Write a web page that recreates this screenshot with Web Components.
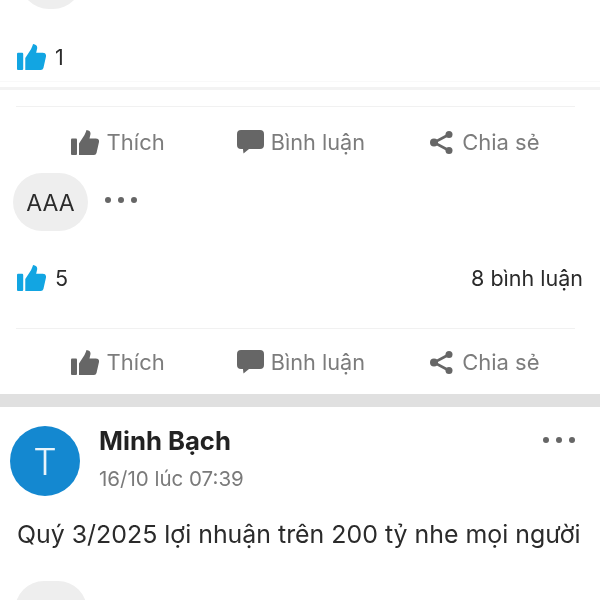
<!DOCTYPE html>
<html lang="vi"><head><meta charset="utf-8"><title>Feed</title>
<style>
html,body{margin:0;background:#fff}
body{font-family:Inter,"Noto Sans",sans-serif;color:#222}
</style></head><body>
<x-feed>
  <x-bubble style="margin:-49px 0 0 20px;--w:62px;--h:58px"></x-bubble>
  <x-stats count="1" style="margin-top:24px;border-bottom:1px solid #f9f9f9"></x-stats>
  <x-rule style="margin-top:5px;--h:3px;--c:#f3f3f3"></x-rule>
  <x-actions style="margin-top:16px"></x-actions>
  <x-bubble style="margin-left:13px;--w:75px;--h:58px" dots>AAA</x-bubble>
  <x-stats count="5" comments="8 bình luận" style="margin-top:23px"></x-stats>
  <x-actions style="margin-top:26px;--top:17px;--bottom:16px"></x-actions>
  <x-rule style="--h:13px;--c:#e0e0e0"></x-rule>
  <x-post name="Minh Bạch" time="16/10 lúc 07:39" letter="T">Quý 3/2025 lợi nhuận trên 200 tỷ nhe mọi người</x-post>
  <x-bubble style="margin:31px 0 0 15px;--w:72px;--h:58px"></x-bubble>
</x-feed>
<script>
const THUMB=`<svg viewBox="0 0 28 25" width="28" height="25" fill="currentColor" aria-hidden="true"><rect x="0" y="8.500" width="6" height="16.500" rx="1"/><path d="M8 13.500 13.500 5Q15 2 15.500 0 19.800 .5 19.500 4L18.500 8.500H25Q28.500 8.500 28 12L25.500 23Q25 25 23 25H8Z"/></svg>`;
const COMMENT=`<svg viewBox="0 0 27 24" width="27" height="24" fill="currentColor" aria-hidden="true"><path d="M4 0H23Q27 0 27 4V15Q27 19 23 19H12L6.500 23.500Q6 20 6 19H4Q0 19 0 15V4Q0 0 4 0Z"/></svg>`;
const SHARE=`<svg viewBox="0 0 25 25" width="25" height="25" fill="currentColor" stroke="currentColor" aria-hidden="true"><path d="M20 4.500 5 12.500 20 20.500" fill="none" stroke-width="2.600"/><circle cx="20" cy="4.500" r="3.500" stroke="none"/><circle cx="5" cy="12.500" r="4" stroke="none"/><circle cx="20" cy="20.500" r="3.500" stroke="none"/></svg>`;
function def(tag,render){customElements.define(tag,class extends HTMLElement{connectedCallback(){if(!this.shadowRoot){this.attachShadow({mode:'open'}).innerHTML=render(this)}}})}
def('x-feed',()=>`<style>:host{display:block;width:600px;height:600px;overflow:hidden;filter:blur(.35px)}</style><slot></slot>`);
def('x-rule',()=>`<style>:host{display:block;height:var(--h,1px);background:var(--c,#eee)}</style>`);
def('x-bubble',el=>`<style>:host{display:flex;align-items:center;gap:17px}
.b{box-sizing:border-box;padding-top:2px;width:var(--w);height:var(--h);border-radius:29px;background:#eeeeee;display:flex;align-items:center;justify-content:center;font-size:23px;color:#2b2b2b}
.d{display:flex;gap:7px;margin-top:-4px}.d i{width:6px;height:6px;border-radius:50%;background:#666}</style>
<div class="b"><slot></slot></div>${el.hasAttribute('dots')?'<div class="d"><i></i><i></i><i></i></div>':''}`);
def('x-stats',el=>`<style>:host{display:flex;align-items:center;justify-content:space-between;height:48px;padding:0 17px;font-size:21.500px;color:#2b2b2b}
.l{display:flex;align-items:center;gap:9px}.t{color:#12a5e2;display:flex;width:29px}svg{width:29px;height:26px}</style>
<div class="l"><span class="t">${THUMB}</span><span>${el.getAttribute('count')}</span></div><span>${el.getAttribute('comments')||''}</span>`);
def('x-actions',()=>`<style>:host{display:block}
.line{height:1px;background:#f1f1f1;margin:0 25px 0 16px}
.row{display:grid;grid-template-columns:repeat(3,1fr);padding:var(--top,19px) 25px var(--bottom,15px) 26px;width:550px}
.a{display:flex;align-items:center;justify-content:center;gap:8px;height:32px;font-size:22px;color:#7c7c7c}
.a:nth-child(2){font-size:21.700px;gap:7px}
svg{color:#666;flex:none}</style>
<div class="line"></div><div class="row">
<div class="a">${THUMB}<span>Thích</span></div><div class="a">${COMMENT}<span>Bình luận</span></div><div class="a">${SHARE}<span>Chia sẻ</span></div></div>`);
def('x-post',el=>`<style>:host{display:block}
.h{display:flex;padding:19px 25px 0 10px;gap:19px;align-items:flex-start}
.av{width:70px;height:70px;border-radius:50%;background:#1488d0;color:#e9f4fb;display:flex;align-items:center;justify-content:center;font-size:37px;font-weight:300;flex:none}
.m{flex:1;display:flex;flex-direction:column;gap:10px}
.n{font-weight:700;font-size:25.700px;line-height:30px;color:#222}
.w{font-size:20.500px;line-height:26px;color:#7a7a7a}
.more{display:flex;gap:7px;padding-top:11px}.more i{width:6px;height:6px;border-radius:50%;background:#666}
.c{padding:22px 17px 0;font-size:24.900px;line-height:32px;color:#2b2b2b;white-space:nowrap}</style>
<div class="h"><div class="av">${el.getAttribute('letter')}</div><div class="m"><div class="n">${el.getAttribute('name')}</div><div class="w">${el.getAttribute('time')}</div></div><div class="more"><i></i><i></i><i></i></div></div>
<div class="c"><slot></slot></div>`);
</script>
</body></html>
